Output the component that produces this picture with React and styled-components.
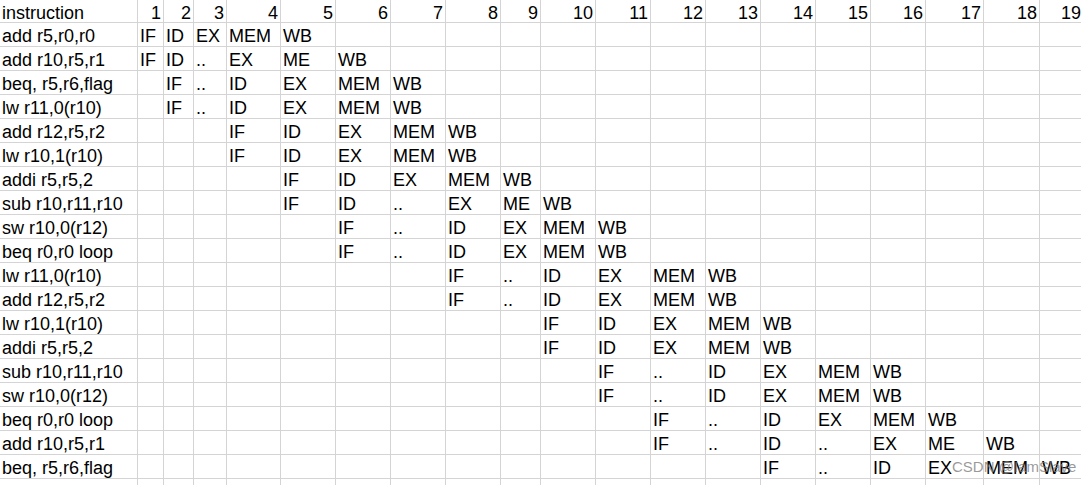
import React from "react";
import styled, { createGlobalStyle } from "styled-components";

const Global = createGlobalStyle`
  html, body {
    margin: 0;
    padding: 0;
    background: #fff;
    overflow: hidden;
  }
`;

// column widths between the 1px grid lines
const widths = [137, 25, 29, 32, 53, 54, 54, 54, 54, 39, 54, 54, 54, 54, 54, 54, 54, 57, 55, 43];

const Page = styled.div`
  position: relative;
  width: 1081px;
  height: 485px;
  overflow: hidden;
`;

const Sheet = styled.div`
  display: grid;
  grid-template-columns: ${widths.map(w => w + "px").join(" ")};
  grid-auto-rows: 23px;
  grid-template-rows: 22px;
  gap: 1px;
  background: #d4d4d4;
  width: max-content;
  font-family: "Liberation Sans", Arial, sans-serif;
  font-size: 18px;
  color: #000;
`;

const Cell = styled.div`
  background: #fff;
  box-sizing: border-box;
  padding: 3px 2px 0 2px;
  line-height: 20px;
  white-space: nowrap;
  text-align: ${p => (p.$right ? "right" : "left")};
`;

const Watermark = styled.div`
  position: absolute;
  left: 952px;
  top: 458px;
  font-family: "Liberation Sans", Arial, sans-serif;
  font-size: 15px;
  color: rgba(120, 120, 120, 0.75);
  white-space: nowrap;
  pointer-events: none;
`;

// [instruction, first cycle column, stages...]
const rows = [
  ["add r5,r0,r0", 1, ["IF", "ID", "EX", "MEM", "WB"]],
  ["add r10,r5,r1", 1, ["IF", "ID", "..", "EX", "ME", "WB"]],
  ["beq, r5,r6,flag", 2, ["IF", "..", "ID", "EX", "MEM", "WB"]],
  ["lw r11,0(r10)", 2, ["IF", "..", "ID", "EX", "MEM", "WB"]],
  ["add r12,r5,r2", 4, ["IF", "ID", "EX", "MEM", "WB"]],
  ["lw r10,1(r10)", 4, ["IF", "ID", "EX", "MEM", "WB"]],
  ["addi r5,r5,2", 5, ["IF", "ID", "EX", "MEM", "WB"]],
  ["sub r10,r11,r10", 5, ["IF", "ID", "..", "EX", "ME", "WB"]],
  ["sw r10,0(r12)", 6, ["IF", "..", "ID", "EX", "MEM", "WB"]],
  ["beq r0,r0 loop", 6, ["IF", "..", "ID", "EX", "MEM", "WB"]],
  ["lw r11,0(r10)", 8, ["IF", "..", "ID", "EX", "MEM", "WB"]],
  ["add r12,r5,r2", 8, ["IF", "..", "ID", "EX", "MEM", "WB"]],
  ["lw r10,1(r10)", 10, ["IF", "ID", "EX", "MEM", "WB"]],
  ["addi r5,r5,2", 10, ["IF", "ID", "EX", "MEM", "WB"]],
  ["sub r10,r11,r10", 11, ["IF", "..", "ID", "EX", "MEM", "WB"]],
  ["sw r10,0(r12)", 11, ["IF", "..", "ID", "EX", "MEM", "WB"]],
  ["beq r0,r0 loop", 12, ["IF", "..", "ID", "EX", "MEM", "WB"]],
  ["add r10,r5,r1", 12, ["IF", "..", "ID", "..", "EX", "ME", "WB"]],
  ["beq, r5,r6,flag", 14, ["IF", "..", "ID", "EX", "MEM", "WB"]],
];

const cycles = Array.from({ length: 19 }, (_, i) => i + 1);

const App = () => {
  return (
    <Page>
      <Global />
      <Sheet>
        <Cell>instruction</Cell>
        {cycles.map(c => (
          <Cell key={"h" + c} $right>
            {c}
          </Cell>
        ))}
        {rows.map(([name, start, stages], r) => (
          <React.Fragment key={r}>
            <Cell>{name}</Cell>
            {cycles.map(c => (
              <Cell key={c}>{stages[c - start] || ""}</Cell>
            ))}
          </React.Fragment>
        ))}
        {widths.map((_, i) => (
          <Cell key={"e" + i} />
        ))}
      </Sheet>
      <Watermark>CSDN @IamSlave</Watermark>
    </Page>
  );
};

export default App;
